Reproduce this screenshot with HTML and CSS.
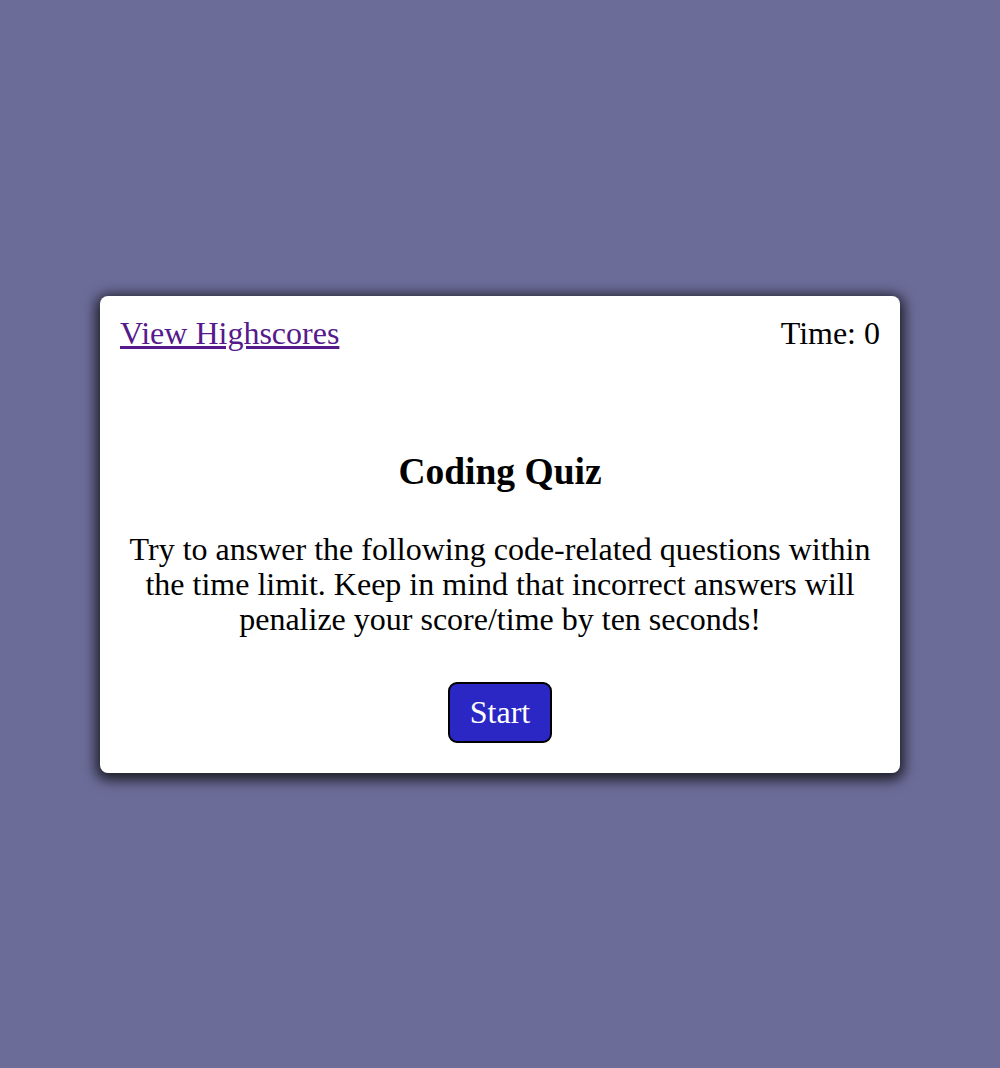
FILE: index.html
```html
<!DOCTYPE html>
<html>
<head>
<meta charset="utf-8">
<link rel="stylesheet" href="styles.css">
</head>
<body>
<main class="card">
  <header class="topbar">
    <a class="scores" href="#">View Highscores</a>
    <span class="timer">Time: 0</span>
  </header>
  <section class="intro">
    <h1 class="title">Coding Quiz</h1>
    <p class="desc">Try to answer the following code-related questions within the time limit. Keep in mind that incorrect answers will penalize your score/time by ten seconds!</p>
    <button class="start">Start</button>
  </section>
</main>
</body>
</html>
```
FILE: styles.css
```css
html, body {
  margin: 0;
  height: 100%;
}
body {
  background: #6c6c99;
  font-family: "Liberation Serif", "Times New Roman", serif;
  display: flex;
  align-items: center;
  justify-content: center;
}
.card {
  width: 800px;
  box-sizing: border-box;
  background: #fff;
  border-radius: 8px;
  box-shadow: 0 3px 13px 4px rgba(0, 0, 0, 0.75);
  padding: 20px 20px 30px;
}
.topbar {
  display: flex;
  justify-content: space-between;
  font-size: 32px;
  line-height: 35px;
}
.scores {
  color: #551a8b;
}
.timer {
  color: #000;
}
.intro {
  display: flex;
  flex-direction: column;
  align-items: center;
  text-align: center;
}
.title {
  margin: 100px 0 0;
  font-size: 37.5px;
  line-height: 42px;
  font-weight: bold;
}
.desc {
  margin: 39px 0 0;
  font-size: 32px;
  line-height: 35px;
}
.start {
  margin-top: 45px;
  width: 104px;
  height: 61px;
  box-sizing: border-box;
  background: #2a27c4;
  color: #fff;
  border: 2px solid #000;
  border-radius: 9px;
  font-family: "Liberation Serif", "Times New Roman", serif;
  font-size: 32px;
  padding: 0;
}
```
